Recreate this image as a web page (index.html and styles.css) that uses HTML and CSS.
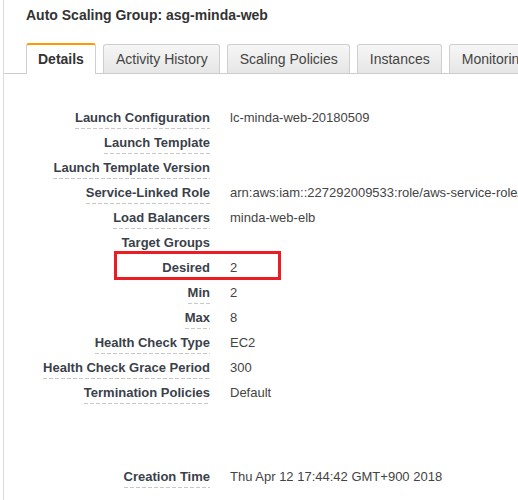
FILE: index.html
```html
<!DOCTYPE html>
<html lang="en">
<head>
<meta charset="utf-8">
<title>Auto Scaling Group: asg-minda-web</title>
<link rel="stylesheet" href="styles.css">
</head>
<body>
<div class="panel">
  <h1 class="title">Auto Scaling Group: asg-minda-web</h1>
  <div class="tabs">
    <div class="tab active">Details</div>
    <div class="tab">Activity History</div>
    <div class="tab">Scaling Policies</div>
    <div class="tab">Instances</div>
    <div class="tab">Monitoring</div>
  </div>
  <div class="details">
    <div class="row"><div class="label"><span>Launch Configuration</span></div><div class="value">lc-minda-web-20180509</div></div>
    <div class="row"><div class="label"><span>Launch Template</span></div><div class="value"></div></div>
    <div class="row"><div class="label"><span>Launch Template Version</span></div><div class="value"></div></div>
    <div class="row"><div class="label"><span>Service-Linked Role</span></div><div class="value">arn:aws:iam::227292009533:role/aws-service-role/autoscaling.amazonaws.com/AWSServiceRoleForAutoScaling</div></div>
    <div class="row"><div class="label"><span>Load Balancers</span></div><div class="value">minda-web-elb</div></div>
    <div class="row"><div class="label"><span>Target Groups</span></div><div class="value"></div></div>
    <div class="row"><div class="label"><span>Desired</span></div><div class="value">2</div><div class="highlight"></div></div>
    <div class="row"><div class="label"><span>Min</span></div><div class="value">2</div></div>
    <div class="row"><div class="label"><span>Max</span></div><div class="value">8</div></div>
    <div class="row"><div class="label"><span>Health Check Type</span></div><div class="value">EC2</div></div>
    <div class="row"><div class="label"><span>Health Check Grace Period</span></div><div class="value">300</div></div>
    <div class="row"><div class="label"><span>Termination Policies</span></div><div class="value">Default</div></div>
    <div class="row spaced"><div class="label"><span>Creation Time</span></div><div class="value">Thu Apr 12 17:44:42 GMT+900 2018</div></div>
  </div>
</div>
</body>
</html>
```
FILE: styles.css
```css
html, body {
  margin: 0;
  padding: 0;
  overflow: hidden;
  background: #fff;
}
body {
  font-family: "Liberation Sans", Arial, sans-serif;
  color: #444;
}
.panel {
  margin-left: 3px;
  border-left: 1px solid #dcdcdc;
  min-height: 500px;
  overflow: hidden;
}
.title {
  margin: 0;
  padding: 7px 0 0 22px;
  font-size: 14px;
  line-height: 16px;
  font-weight: bold;
  color: #333;
  white-space: nowrap;
}
.tabs {
  display: flex;
  margin-top: 20px;
  padding-left: 15px;
  height: 30px;
  border-bottom: 1px solid #cccccc;
  white-space: nowrap;
}
.tab {
  flex: none;
  margin-left: 7px;
  margin-top: 1px;
  height: 29px;
  line-height: 29px;
  padding: 0 11px 0 12px;
  border: 1px solid #cfcfcf;
  border-bottom: none;
  border-radius: 3px 3px 0 0;
  background: linear-gradient(#f6f6f6, #e6e6e6);
  font-size: 14px;
  color: #444;
  box-sizing: border-box;
}
.tab.active {
  margin-top: 0;
  height: 31px;
  line-height: 28px;
  padding: 0 11px;
  border-top: 2px solid #f90;
  background: #fff;
  font-weight: bold;
  color: #333;
}
.details {
  padding-top: 36px;
}
.row {
  position: relative;
  display: grid;
  grid-template-columns: 190px auto;
  column-gap: 20px;
  padding-left: 16px;
  height: 25px;
  font-size: 13px;
  line-height: 16px;
  white-space: nowrap;
}
.row.spaced {
  margin-top: 59px;
}
.label {
  text-align: right;
}
.label span {
  display: inline-block;
  font-weight: bold;
  color: #3a3f4a;
  background: repeating-linear-gradient(90deg, #c8c8c8 0 4px, transparent 4px 6px) left bottom / 100% 1px no-repeat;
  padding-bottom: 3px;
}
.value {
  color: #444;
}
.highlight {
  position: absolute;
  left: 110px;
  top: -9px;
  width: 167px;
  height: 29px;
  box-sizing: border-box;
  border: 3px solid #ec1c24;
}
```
